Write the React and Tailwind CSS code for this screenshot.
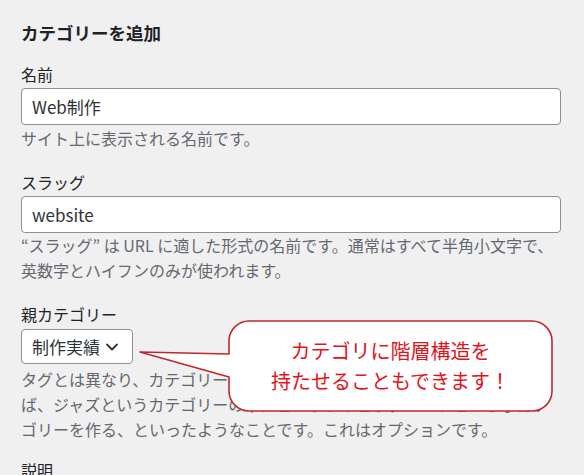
import React from "react";

const font = { fontFamily: '"Noto Sans CJK JP", "Noto Sans", sans-serif' };

function Label({ children }) {
  return <div className="text-[16px] leading-[22px] text-[#1d2327]">{children}</div>;
}

function Help({ children, className = "" }) {
  return (
    <p className={"text-[16px] leading-[25px] text-[#646970] whitespace-nowrap " + className}>
      {children}
    </p>
  );
}

function Callout() {
  return (
    <div className="absolute left-[138px] top-[319px] w-[416px] h-[94px]">
      <svg width="416" height="94" viewBox="0 0 416 94" className="absolute inset-0">
        <path
          d="M91 35 L2 33 L91 58 L91 72 A20 20 0 0 0 111 92 L394 92 A20 20 0 0 0 414 72 L414 22 A20 20 0 0 0 394 2 L111 2 A20 20 0 0 0 91 22 Z"
          fill="#ffffff"
          stroke="#c1272d"
          strokeWidth="1.6"
          strokeLinejoin="round"
        />
      </svg>
      <div className="absolute left-[91px] top-[2px] w-[323px] h-[90px] flex flex-col items-center justify-center text-[20px] leading-[30px] text-[#e3131b]">
        <div>カテゴリに階層構造を</div>
        <div>持たせることもできます！</div>
      </div>
    </div>
  );
}

export default function App() {
  return (
    <div style={font} className="relative w-full h-screen overflow-hidden bg-[#f0f0f1] pl-[21px] pr-[23px] pt-[21px]">
      <h2 className="text-[17.5px] leading-[24px] font-bold text-[#1d2327]">カテゴリーを追加</h2>

      <div className="mt-[18px]">
        <Label>名前</Label>
        <input
          readOnly
          value="Web制作"
          className="mt-[3px] block w-full h-[37px] bg-white border border-[#8c8f94] rounded-[4px] px-[10px] text-[17px] text-[#2c3338] outline-none"
        />
        <Help className="mt-[1px]">サイト上に表示される名前です。</Help>
      </div>

      <div className="mt-[20px]">
        <Label>スラッグ</Label>
        <input
          readOnly
          value="website"
          className="mt-[3px] block w-full h-[37px] bg-white border border-[#8c8f94] rounded-[4px] px-[10px] text-[17px] text-[#2c3338] outline-none"
        />
        <Help className="mt-[0px]">
          “スラッグ” は URL に適した形式の名前です。通常はすべて半角小文字で、
          <br />
          英数字とハイフンのみが使われます。
        </Help>
      </div>

      <div className="mt-[20px]">
        <Label>親カテゴリー</Label>
        <div className="mt-[4px] w-[112px] h-[35px] bg-white border border-[#8c8f94] rounded-[4px] flex items-center pl-[10px] text-[17px] text-[#2c3338]">
          <span>制作実績</span>
          <svg width="14" height="14" viewBox="0 0 14 14" className="ml-[5px]">
            <path d="M2 4.5 L7 9.5 L12 4.5" fill="none" stroke="#2c3338" strokeWidth="1.8" strokeLinecap="round" strokeLinejoin="round" />
          </svg>
        </div>
        <Help className="mt-[3px]">
          タグとは異なり、カテゴリーは階層構造を持つことができます。たとえ
          <br />
          ば、ジャズというカテゴリーの下にビバップやビッグバンドという子カテ
          <br />
          ゴリーを作る、といったようなことです。これはオプションです。
        </Help>
      </div>

      <div className="mt-[17px]">
        <Label>説明</Label>
      </div>

      <Callout />
    </div>
  );
}
